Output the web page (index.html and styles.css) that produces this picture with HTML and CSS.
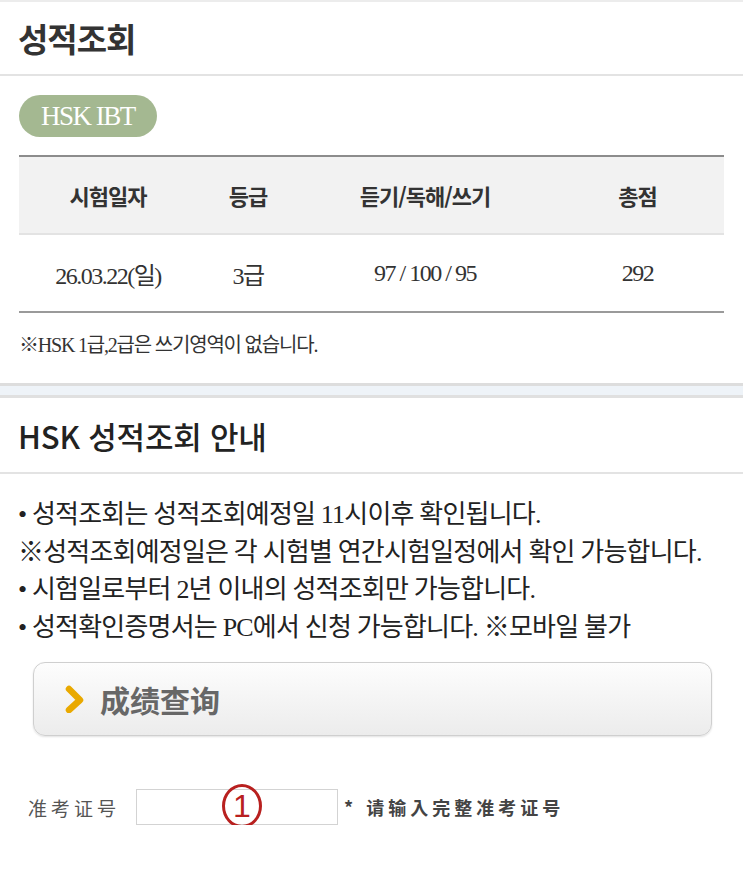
FILE: index.html
```html
<!DOCTYPE html>
<html lang="ko">
<head>
  <meta charset="UTF-8">
  <title>성적조회</title>
  <link rel="stylesheet" href="styles.css">
</head>
<body>
  <div class="page">
    <h1 class="page-title">성적조회</h1>

    <div class="result">
      <span class="badge">HSK IBT</span>

      <div class="score-table">
        <div class="row head">
          <div>시험일자</div>
          <div>등급</div>
          <div>듣기/독해/쓰기</div>
          <div>총점</div>
        </div>
        <div class="row body">
          <div>26.03.22(일)</div>
          <div>3급</div>
          <div>97 / 100 / 95</div>
          <div>292</div>
        </div>
      </div>

      <p class="note">※HSK 1급,2급은 쓰기영역이 없습니다.</p>
    </div>

    <div class="divider"></div>

    <h2 class="section-title">HSK 성적조회 안내</h2>

    <ul class="guide">
      <li>• 성적조회는 성적조회예정일 11시이후 확인됩니다.</li>
      <li>※성적조회예정일은 각 시험별 연간시험일정에서 확인 가능합니다.</li>
      <li>• 시험일로부터 2년 이내의 성적조회만 가능합니다.</li>
      <li>• 성적확인증명서는 PC에서 신청 가능합니다. ※모바일 불가</li>
    </ul>

    <div class="query-box">
      <svg class="chevron" width="22" height="28" viewBox="0 0 22 28">
        <polyline points="5,4 16,15 5,25" fill="none" stroke="#e9a900" stroke-width="6.5" stroke-linejoin="round" stroke-linecap="round"/>
      </svg>
      <span>成绩查询</span>
    </div>

    <div class="ticket-row">
      <label>准考证号</label>
      <div class="ticket-field">
        <input type="text">
        <span class="mark">1</span>
      </div>
      <span class="hint">* 请输入完整准考证号</span>
    </div>
  </div>
</body>
</html>
```

FILE: styles.css
```css
body {
  margin: 0;
  background: #fff;
  color: #333;
  font-family: "Liberation Serif", "Noto Sans CJK KR", serif;
}

.page {
  border-top: 2px solid #ececec;
}

.page-title {
  margin: 0;
  padding-left: 18px;
  height: 72px;
  line-height: 72px;
  font-family: "Noto Sans CJK KR", sans-serif;
  font-size: 33px;
  font-weight: bold;
  letter-spacing: -1px;
  color: #333;
  border-bottom: 2px solid #e3e3e3;
}

.result {
  padding: 19px 19px 0 19px;
}

.badge {
  display: inline-block;
  width: 138px;
  height: 42px;
  line-height: 42px;
  text-align: center;
  background: #a4b891;
  color: #fff;
  border-radius: 21px;
  font-size: 27px;
  letter-spacing: -1.5px;
}

.score-table {
  margin-top: 18px;
  border-top: 2px solid #8c8c8c;
  border-bottom: 2px solid #9a9a9a;
}

.row {
  display: grid;
  grid-template-columns: 178px 102px 252px 1fr;
  height: 76px;
  align-items: center;
  text-align: center;
}

.row.head {
  background: #f2f2f2;
  border-bottom: 2px solid #e3e3e3;
  font-family: "Noto Sans CJK KR", sans-serif;
  font-size: 22px;
  font-weight: bold;
  letter-spacing: -1px;
  color: #333;
}

.row.body {
  font-size: 24px;
  letter-spacing: -1.5px;
  color: #333;
}

.note {
  margin: 19px 0 0 0;
  line-height: 26px;
  font-size: 20px;
  letter-spacing: -1.2px;
  color: #333;
}

.divider {
  margin-top: 25px;
  height: 9px;
  background: #eef3f8;
  border-top: 3px solid #dddddd;
  border-bottom: 3px solid #e0e0e0;
}

.section-title {
  margin: 0;
  padding-left: 18px;
  height: 74px;
  line-height: 76px;
  font-family: "Noto Sans CJK KR", sans-serif;
  font-size: 31px;
  font-weight: 500;
  letter-spacing: -0.2px;
  color: #222;
  border-bottom: 2px solid #e3e3e3;
}

.guide {
  list-style: none;
  margin: 22px 0 0 0;
  padding: 0 0 0 18px;
  font-size: 26px;
  line-height: 37.6px;
  letter-spacing: -0.8px;
  color: #222;
}

.query-box {
  display: flex;
  align-items: center;
  gap: 14px;
  margin: 16px 31px 0 33px;
  height: 72px;
  padding-left: 30px;
  border: 1px solid #cfcfcf;
  border-radius: 12px;
  background: linear-gradient(#fdfdfd, #ececec);
  box-shadow: 0 1px 2px rgba(0, 0, 0, 0.12);
  font-family: "Noto Sans CJK SC", sans-serif;
  font-size: 30px;
  font-weight: bold;
  color: #676767;
}

.ticket-row {
  display: flex;
  align-items: center;
  margin-top: 53px;
  padding-left: 28px;
  font-family: "Noto Sans CJK SC", sans-serif;
  font-size: 19px;
  color: #555;
}

.ticket-row label {
  width: 108px;
  letter-spacing: 4px;
}

.ticket-field {
  position: relative;
}

.ticket-field input {
  display: block;
  width: 202px;
  height: 36px;
  box-sizing: border-box;
  border: 1px solid #d3d3d3;
  background: #fff;
}

.mark {
  position: absolute;
  left: 86px;
  top: -5px;
  width: 34px;
  height: 38px;
  border: 3px solid #b8201f;
  border-radius: 50%;
  text-align: center;
  line-height: 38px;
  font-family: "Liberation Sans", sans-serif;
  font-size: 32px;
  color: #b8201f;
}

.hint {
  margin-left: 6px;
  font-size: 18px;
  font-weight: bold;
  letter-spacing: 4px;
  color: #444;
}
```
